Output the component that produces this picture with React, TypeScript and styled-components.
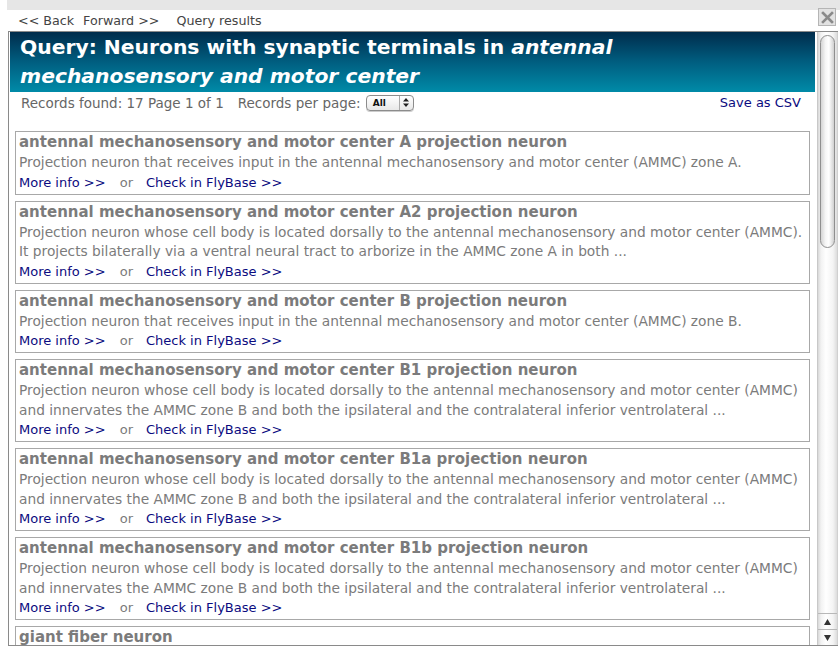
import styled, { createGlobalStyle } from "styled-components";

const GlobalStyle = createGlobalStyle`
  html, body {
    margin: 0;
    padding: 0;
    background: #fff;
  }
  body {
    font-family: "DejaVu Sans", Verdana, sans-serif;
  }
`;

const Page = styled.div`
  width: 840px;
  height: 650px;
  overflow: hidden;
  display: flex;
  flex-direction: column;
`;

const TopStrip = styled.div`
  height: 10px;
  margin-left: 7px;
  background: #e6e6e6;
  flex-shrink: 0;
`;

const NavBar = styled.div`
  height: 21px;
  display: flex;
  align-items: center;
  padding-left: 18px;
  font-size: 12.7px;
  color: #444;
  flex-shrink: 0;
`;

const NavLink = styled.span<{ $gap?: number }>`
  margin-right: ${(p) => p.$gap ?? 0}px;
  cursor: pointer;
`;

const CloseButton = styled.div`
  margin-left: auto;
  margin-right: 4px;
  align-self: flex-start;
  margin-top: -2px;
  width: 16px;
  height: 16px;
  border: 1px solid #b5b5b5;
  background: #e2e2e2;
  display: flex;
  align-items: center;
  justify-content: center;

  & svg {
    width: 13px;
    height: 13px;
  }
`;

const Frame = styled.div`
  margin: 0 2px 4px 8px;
  flex: 1;
  display: flex;
  border-left: 1px solid #8a8a8a;
  border-top: 1px solid #8a8a8a;
  border-bottom: 1px solid #8a8a8a;
  min-height: 0;
`;

const Content = styled.div`
  flex: 1;
  overflow: hidden;
  padding: 0 0 0 1px;
  display: flex;
  flex-direction: column;
`;

const Header = styled.div`
  background: linear-gradient(to bottom, #002c4c 0%, #005e80 50%, #008ba8 100%);
  color: #fff;
  padding: 1px 10px 0 10px;
  height: 59px;
  font-size: 20.3px;
  font-weight: bold;
  line-height: 29px;
  flex-shrink: 0;

  & em {
    font-style: italic;
  }
`;

const InfoRow = styled.div`
  display: flex;
  align-items: center;
  height: 21px;
  padding: 0 14px 0 11px;
  font-size: 13.5px;
  color: #666;
  flex-shrink: 0;
`;

const InfoText = styled.span<{ $gap?: number }>`
  margin-right: ${(p) => p.$gap ?? 0}px;
`;

const Select = styled.div`
  display: flex;
  align-items: center;
  height: 14px;
  width: 46px;
  border: 1px solid #8c8c8c;
  border-radius: 4px;
  background: linear-gradient(to bottom, #fff, #e8e8e8);
  font-size: 9px;
  font-weight: bold;
  color: #111;
  margin-left: 5px;
  box-shadow: 0 1px 0 #ccc;
`;

const SelectLabel = styled.span`
  flex: 1;
  padding-left: 6px;
`;

const SelectArrows = styled.span`
  width: 13px;
  border-left: 1px solid #aaa;
  height: 100%;
  display: flex;
  align-items: center;
  justify-content: center;

  & svg {
    width: 6px;
    height: 9px;
  }
`;

const SaveLink = styled.span`
  margin-left: auto;
  color: #0b0b80;
  font-size: 13px;
  cursor: pointer;
`;

const List = styled.div`
  display: flex;
  flex-direction: column;
  gap: 6px;
  padding: 18px 5px 0 5px;
`;

const Record = styled.div`
  border: 1px solid #a8a8a8;
  padding: 0 3px 1px 3px;
  flex-shrink: 0;
`;

const Title = styled.div`
  font-size: 15px;
  font-weight: bold;
  color: #7b7b7b;
  line-height: 21px;
  white-space: nowrap;
`;

const Description = styled.div`
  font-size: 13.75px;
  color: #7b7b7b;
  line-height: 19.5px;
  white-space: nowrap;
`;

const Links = styled.div`
  font-size: 13px;
  line-height: 20px;
  color: #7b7b7b;
`;

const Link = styled.span`
  color: #0b0b80;
  cursor: pointer;
`;

const Or = styled.span`
  margin: 0 13px 0 14px;
`;

const Scrollbar = styled.div`
  width: 19px;
  flex-shrink: 0;
  margin-left: 2px;
  display: flex;
  flex-direction: column;
  background: linear-gradient(to right, #d8d8d8 0, #f2f2f2 3px, #fff 8px, #f4f4f4 15px, #dcdcdc 19px);
  border-left: 1px solid #c8c8c8;
  border-right: 1px solid #d0d0d0;
`;

const Track = styled.div`
  flex: 1;
  padding: 3px 2px 0 2px;
`;

const Thumb = styled.div`
  height: 211px;
  border: 1px solid #8f8f8f;
  border-radius: 8px;
  background: linear-gradient(to right, #d4d4d4 0, #f6f6f6 35%, #fff 60%, #d0d0d0 100%);
`;

const ArrowButton = styled.div`
  height: 15px;
  border-top: 1px solid #b8b8b8;
  display: flex;
  align-items: center;
  justify-content: center;

  & svg {
    width: 7px;
    height: 6px;
  }
`;

type Item = {
  title: string;
  lines: string[];
};

const items: Item[] = [
  {
    title: "antennal mechanosensory and motor center A projection neuron",
    lines: [
      "Projection neuron that receives input in the antennal mechanosensory and motor center (AMMC) zone A.",
    ],
  },
  {
    title: "antennal mechanosensory and motor center A2 projection neuron",
    lines: [
      "Projection neuron whose cell body is located dorsally to the antennal mechanosensory and motor center (AMMC).",
      "It projects bilaterally via a ventral neural tract to arborize in the AMMC zone A in both ...",
    ],
  },
  {
    title: "antennal mechanosensory and motor center B projection neuron",
    lines: [
      "Projection neuron that receives input in the antennal mechanosensory and motor center (AMMC) zone B.",
    ],
  },
  {
    title: "antennal mechanosensory and motor center B1 projection neuron",
    lines: [
      "Projection neuron whose cell body is located dorsally to the antennal mechanosensory and motor center (AMMC)",
      "and innervates the AMMC zone B and both the ipsilateral and the contralateral inferior ventrolateral ...",
    ],
  },
  {
    title: "antennal mechanosensory and motor center B1a projection neuron",
    lines: [
      "Projection neuron whose cell body is located dorsally to the antennal mechanosensory and motor center (AMMC)",
      "and innervates the AMMC zone B and both the ipsilateral and the contralateral inferior ventrolateral ...",
    ],
  },
  {
    title: "antennal mechanosensory and motor center B1b projection neuron",
    lines: [
      "Projection neuron whose cell body is located dorsally to the antennal mechanosensory and motor center (AMMC)",
      "and innervates the AMMC zone B and both the ipsilateral and the contralateral inferior ventrolateral ...",
    ],
  },
  {
    title: "giant fiber neuron",
    lines: [
      "Large descending neuron whose cell body is located in the brain and whose axon projects to the",
      "thoracic ganglion ...",
    ],
  },
];

function App() {
  return (
    <Page>
      <GlobalStyle />
      <TopStrip />
      <NavBar>
        <NavLink $gap={9}>&lt;&lt; Back</NavLink>
        <NavLink $gap={17}>Forward &gt;&gt;</NavLink>
        <span>Query results</span>
        <CloseButton>
          <svg viewBox="0 0 13 13">
            <path d="M2 2 L11 11 M11 2 L2 11" stroke="#8a8a8a" strokeWidth="2.6" strokeLinecap="square" />
          </svg>
        </CloseButton>
      </NavBar>
      <Frame>
        <Content>
          <Header>
            Query: Neurons with synaptic terminals in <em>antennal mechanosensory and motor center</em>
          </Header>
          <InfoRow>
            <InfoText $gap={14}>Records found: 17 Page 1 of 1</InfoText>
            <InfoText>Records per page:</InfoText>
            <Select>
              <SelectLabel>All</SelectLabel>
              <SelectArrows>
                <svg viewBox="0 0 6 9">
                  <path d="M3 0 L6 3.5 H0 Z M3 9 L6 5.5 H0 Z" fill="#222" />
                </svg>
              </SelectArrows>
            </Select>
            <SaveLink>Save as CSV</SaveLink>
          </InfoRow>
          <List>
            {items.map((item) => (
              <Record key={item.title}>
                <Title>{item.title}</Title>
                {item.lines.map((line) => (
                  <Description key={line}>{line}</Description>
                ))}
                <Links>
                  <Link>More info &gt;&gt;</Link>
                  <Or>or</Or>
                  <Link>Check in FlyBase &gt;&gt;</Link>
                </Links>
              </Record>
            ))}
          </List>
        </Content>
        <Scrollbar>
          <Track>
            <Thumb />
          </Track>
          <ArrowButton>
            <svg viewBox="0 0 7 6">
              <path d="M3.5 0 L7 6 H0 Z" fill="#333" />
            </svg>
          </ArrowButton>
          <ArrowButton>
            <svg viewBox="0 0 7 6">
              <path d="M0 0 H7 L3.5 6 Z" fill="#333" />
            </svg>
          </ArrowButton>
        </Scrollbar>
      </Frame>
    </Page>
  );
}

export default App;
